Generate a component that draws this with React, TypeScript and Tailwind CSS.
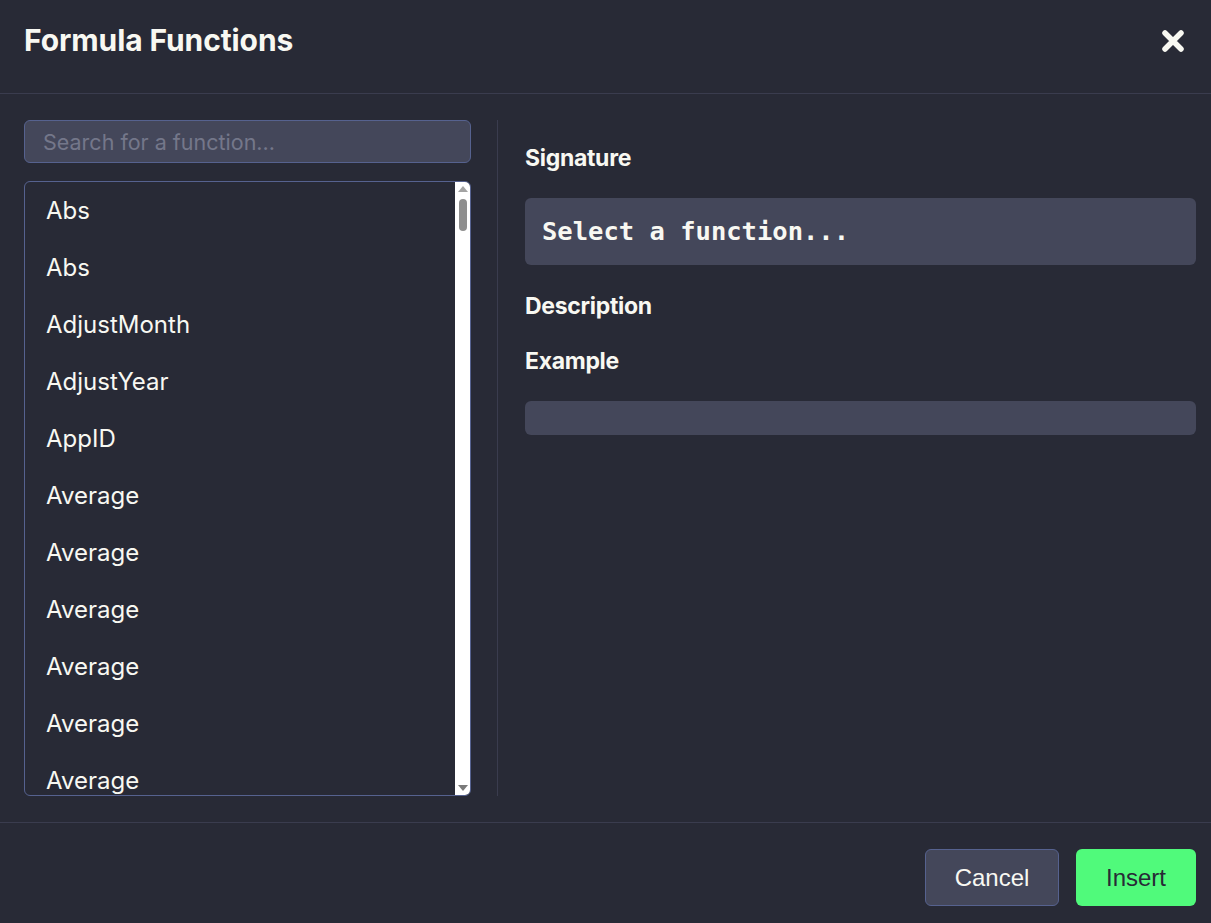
import React from 'react';

const functions = [
  'Abs', 'Abs', 'AdjustMonth', 'AdjustYear', 'AppID',
  'Average', 'Average', 'Average', 'Average', 'Average', 'Average',
];

const ui = { fontFamily: 'Inter, "Noto Sans", sans-serif' };

const App: React.FC = () => {
  return (
    <div className="h-screen w-full bg-[#282a36] text-[#f8f8f2] flex flex-col overflow-hidden" style={ui}>
      {/* Header */}
      <div className="h-[94px] flex items-center justify-between pl-6 pr-[26px] pb-[12px] border-b border-[#3a3c4e] shrink-0">
        <h1 className="text-[30px] font-bold tracking-[-0.1px]">Formula Functions</h1>
        <button className="text-[#f8f8f2]">
          <svg width="24" height="24" viewBox="0 0 24 24">
            <path d="M4 4 L20 20 M20 4 L4 20" stroke="currentColor" strokeWidth="5.5" strokeLinecap="round" />
          </svg>
        </button>
      </div>

      {/* Body */}
      <div className="flex-1 flex pl-6 pr-[15px] pt-[26px] pb-[26px] min-h-0">
        <div className="w-[447px] flex flex-col shrink-0">
          <input
            placeholder="Search for a function..."
            className="h-[43px] w-full rounded-md bg-[#44475a] border border-[#56628f] px-[18px] text-[21.5px] text-[#f8f8f2] placeholder:text-[#74778a] outline-none"
          />

          <div className="mt-[18px] flex-1 flex border border-[#56628f] rounded-md overflow-hidden min-h-0">
            <ul className="flex-1 overflow-hidden">
              {functions.map((fn, i) => (
                <li key={i} className="h-[57px] flex items-center pl-[21px] text-[24px]">
                  {fn}
                </li>
              ))}
            </ul>
            {/* scrollbar */}
            <div className="w-[15px] bg-white flex flex-col items-center shrink-0">
              <div className="mt-[4px] w-0 h-0 border-l-[5px] border-r-[5px] border-b-[6px] border-l-transparent border-r-transparent border-b-[#a3a3a3]" />
              <div className="mt-[7px] w-[8px] h-[32px] rounded-full bg-[#8f8f8f]" />
              <div className="flex-1" />
              <div className="mb-[4px] w-0 h-0 border-l-[5px] border-r-[5px] border-t-[6px] border-l-transparent border-r-transparent border-t-[#7a7a7a]" />
            </div>
          </div>
        </div>

        <div className="ml-[26px] border-l border-[#3a3c4e]" />

        <div className="flex-1 pl-[27px] flex flex-col">
          <h3 className="mt-[24px] h-[28px] leading-[28px] text-[23px] font-bold tracking-[-0.3px]">Signature</h3>
          <div className="mt-[26px] h-[67px] rounded-md bg-[#44475a] flex items-center px-[17px]">
            <span className="text-[25.5px] font-bold" style={{ fontFamily: '"DejaVu Sans Mono", monospace' }}>
              Select a function...
            </span>
          </div>
          <h3 className="mt-[27px] h-[28px] leading-[28px] text-[23px] font-bold tracking-[-0.3px]">Description</h3>
          <h3 className="mt-[27px] h-[28px] leading-[28px] text-[23px] font-bold tracking-[-0.3px]">Example</h3>
          <div className="mt-[26px] h-[34px] rounded-md bg-[#44475a]" />
        </div>
      </div>

      {/* Footer */}
      <div className="h-[101px] border-t border-[#3a3c4e] flex items-start justify-end gap-[17px] pt-[26px] px-[15px] shrink-0" style={{ fontFamily: '"Liberation Sans", Arial, sans-serif' }}>
        <button className="h-[57px] w-[134px] rounded-md bg-[#44475a] border border-[#56628f] text-[24px] text-[#f8f8f2]">
          Cancel
        </button>
        <button className="h-[57px] w-[120px] rounded-md bg-[#50fa7b] text-[24px] text-[#282a36]">
          Insert
        </button>
      </div>
    </div>
  );
};

export default App;
